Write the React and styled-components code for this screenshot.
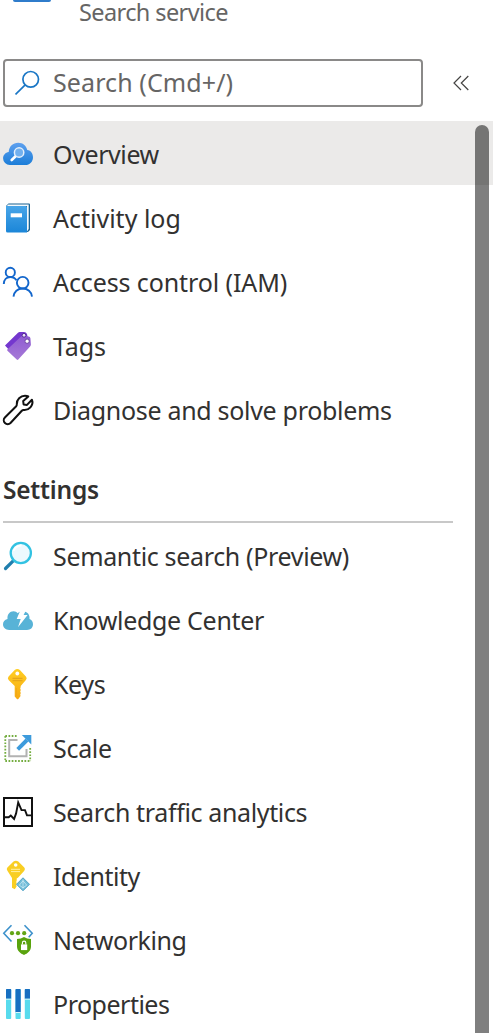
import React from "react";
import styled, { createGlobalStyle } from "styled-components";

const GlobalStyle = createGlobalStyle`
  * { box-sizing: border-box; }
  html, body { margin: 0; padding: 0; background: #fff; }
  body {
    font-family: "Noto Sans", "Open Sans", sans-serif;
    font-size: 25px;
    color: #323130;
    height: 1033px;
    overflow: hidden;
  }
`;

const Page = styled.main`
  width: 501px;
  height: 1033px;
  overflow: hidden;
  background: #fff;
  display: flex;
  flex-direction: column;
`;

const Header = styled.header`
  display: flex;
  height: 59px;
  flex: none;
  padding-left: 13px;
`;

const ServiceMark = styled.div`
  width: 38px;
  height: 1.5px;
  margin-right: 28px;
  background: #2f7ccb;
  border-radius: 0 0 6px 6px;
`;

const Subtitle = styled.div`
  height: 25px;
  line-height: 25px;
  font-size: 23.5px;
  color: #666564;
  white-space: nowrap;
  letter-spacing: ${(p) => p.$spacing}px;
`;

const Toolbar = styled.div`
  display: flex;
  align-items: center;
  flex: none;
  height: 48px;
  padding-left: 3px;
  margin-bottom: 14px;
`;

const SearchBox = styled.div`
  display: flex;
  align-items: center;
  width: 420px;
  height: 48px;
  padding-left: 10px;
  border: 2px solid #8a8988;
  border-radius: 4px;
`;

const Placeholder = styled.span`
  margin: 0 0 2px 12px;
  color: #666564;
  white-space: nowrap;
  letter-spacing: ${(p) => p.$spacing}px;
`;

const Collapse = styled.button`
  display: flex;
  border: 0;
  padding: 0;
  margin-left: 30px;
  background: none;
`;

const Menu = styled.nav`
  position: relative;
  flex: 1;
  width: 493px;
  min-height: 0;
`;

const Row = styled.div`
  display: flex;
  align-items: center;
  height: 64px;
  padding: 2px 0 0 3px;
  background: ${(p) => (p.$active ? "#ebeae9" : "transparent")};
`;

const Glyph = styled.svg`
  width: 30px;
  height: 30px;
  flex: none;
  overflow: visible;
`;

const Label = styled.span`
  margin-left: 20px;
  white-space: nowrap;
  letter-spacing: ${(p) => p.$spacing}px;
`;

const SectionTitle = styled.h2`
  margin: 0 0 0 3px;
  width: 450px;
  height: 82px;
  padding-top: 33px;
  border-bottom: 2px solid #c8c8c8;
  font-size: 24.5px;
  line-height: 32px;
  font-weight: 600;
  letter-spacing: ${(p) => p.$spacing}px;
`;

const Scrollbar = styled.div`
  position: absolute;
  top: 4px;
  right: 4px;
  bottom: -20px;
  width: 14px;
  border-radius: 7px;
  background: rgba(0, 0, 0, 0.5);
`;

const Icon = ({ children }) => <Glyph viewBox="0 0 30 30" fill="none">{children}</Glyph>;

const OverviewIcon = () => (
  <Icon>
    <defs>
      <linearGradient id="cloud" x1="0" y1="0" x2="0" y2="1">
        <stop stopColor="#5ea0ef" /><stop offset="1" stopColor="#1c7ed8" />
      </linearGradient>
    </defs>
    <path d="M6.800 26A6.700 6.700 0 0 1 .1 19.400c0-3.500 2.400-6 5.600-6.500C6 7.400 10 3.700 15.200 3.700c4.600 0 8 2.800 9.100 7.200C28 11.500 30 14.400 30 18.200 30 22.700 26.800 26 22.300 26z" fill="url(#cloud)" />
    <path d="M12.600 17.200 8.700 21" stroke="#fff" strokeWidth="2.600" strokeLinecap="round" />
    <circle cx="16.100" cy="13.500" r="4.700" fill="#72b0ee" stroke="#e4effb" strokeWidth="1.500" />
  </Icon>
);

const LogIcon = () => (
  <Icon>
    <defs>
      <linearGradient id="book" x1="0" y1="0" x2="0" y2="1">
        <stop stopColor="#48a5e8" /><stop offset="1" stopColor="#1b86d8" />
      </linearGradient>
    </defs>
    <path d="M5.500 .6H26q1 0 1 1V27l-2 2H5L3 27V3z" fill="#1a6292" />
    <path d="M5 1.500h20.700V26L24 28.500V3H4z" fill="#f4f9fc" />
    <path d="M3 3h19.500q1.500 0 1.500 1.500v25H4.500Q3 29.500 3 28z" fill="url(#book)" />
    <path d="M7.700 10.300H19v4H7.700z" fill="#fff" />
  </Icon>
);

const PeopleIcon = () => (
  <Icon>
    <g stroke="#1266cc" strokeWidth="1.900">
      <circle cx="7.300" cy="5.400" r="4.600" />
      <path d="M.8 17c0-4.300 2.800-7 6.500-7 2.700 0 5 1.300 6.100 3.300" />
      <circle cx="19.700" cy="15.700" r="5.800" />
      <path d="M10.500 29.700c.4-5 4.200-8.200 9.200-8.200 4.900 0 8.900 3.200 9.300 8.200" />
    </g>
  </Icon>
);

const TagsIcon = () => (
  <Icon>
    <defs>
      <linearGradient id="tag" x1="0" y1="0" x2="0" y2="1">
        <stop stopColor="#8f5bd2" /><stop offset="1" stopColor="#a67ad7" />
      </linearGradient>
    </defs>
    <path d="M2 14.500 15 1.700q.7-.7 1.700-.7L21 1.100q2 0 3 2l1 5L7 20z" fill="#7437ce" />
    <path d="M4.300 18.500 18 5.500q.9-.8 2-.7l5.700.8q1.500.2 1.700 1.700l.5 6.200q0 1.100-.8 1.900L15.300 28.500q-.8.8-1.600 0l-9-8.500q-.9-.8-.4-1.500z" fill="url(#tag)" />
    <circle cx="21" cy="4.300" r="1.900" fill="#eee4f9" stroke="#552f93" />
    <circle cx="24.100" cy="10.200" r="2.200" fill="#fff" stroke="#6942a1" />
  </Icon>
);

const WrenchIcon = () => (
  <Icon>
    <path d="M1.900 22.500 13.200 11.200c.6-.6.700-1.200.6-2C13.500 4.600 17.500.8 22 .8c1.400 0 2.200.1 3.300.6L20.200 6.100l.4 3.400 3.400.4 4.900-5.200c1 2.600.4 5.500-1.500 7.600-1.800 2-4.200 2.900-6.600 2.700-.9-.1-1.400.1-2 .7L7.500 28A3.900 3.900 0 0 1 1.900 22.500z" stroke="#111" strokeWidth="2" strokeLinejoin="round" />
  </Icon>
);

const SemanticIcon = () => (
  <Icon>
    <path d="M10.200 19.800 2.500 27.500" stroke="#207ead" strokeWidth="3.200" strokeLinecap="round" />
    <circle cx="17.800" cy="12" r="10.100" fill="#edf9fe" stroke="#32c2e2" strokeWidth="2.300" />
    <path d="M10.500 10C12 6.500 15 4.500 18.500 4.500" stroke="#fff" strokeWidth="1.800" />
  </Icon>
);

const KnowledgeIcon = () => (
  <Icon>
    <path d="M6.200 25C2.600 25 0 22.600 0 19.300c0-2.600 1.600-4.900 4.500-5.400-.4-4.300 2.200-7.600 6-7.600 1.800 0 3.300.8 4.300 2 1.300-1.600 2.900-2 5.200-2 4.500.1 7 3.600 6.500 7.600 2.200.8 3.500 2.800 3.500 5.400 0 3.400-2.400 5.700-6 5.700z" fill="#58b3d7" />
    <path d="M18.200 3.300h5.800l-3.400 6.700h4L15 22.200l2.700-8.200h-4z" fill="#fff" />
  </Icon>
);

const KeyShape = ({ id }) => (
  <>
    <defs>
      <linearGradient id={id} x1="0" y1="0" x2="0" y2="1">
        <stop stopColor="#ffce22" /><stop offset="1" stopColor="#f6aa13" />
      </linearGradient>
    </defs>
    <path d="M11.700 1Q14.300-.8 16.900 1l6 6.500q1.600 1.700 0 3.400L17.700 17v1l-.5 1.500.6 1.500-.6 1.600.6 1.500-.6 1.600.4 1.200-2.300 3q-.7.6-1.400 0l-2.200-2.500V17L5.600 10.900q-1.500-1.700 0-3.400z" fill={`url(#${id})`} />
    <circle cx="14.300" cy="4.500" r="1.900" fill="#fff" />
  </>
);

const KeyIcon = () => (
  <Icon>
    <KeyShape id="gold" />
    <path d="M9.500 9.300h10M9.500 11.700h10" stroke="#e0a01b" strokeWidth="1" />
    <path d="M13.400 19v8" stroke="#f0a41b" strokeWidth=".8" />
  </Icon>
);

const ScaleIcon = () => (
  <Icon>
    <path d="M2.300 3H15M2.300 3V28M2.300 28H28M27.200 15V28" stroke="#74ad40" strokeWidth="1.800" strokeDasharray="1.700 1.500" />
    <path d="M14.500 7H6.200V23.300H23.500V16" stroke="#b2b2b2" strokeWidth="2" />
    <path d="M14.700 16.300 24 7" stroke="#3d9bdc" strokeWidth="3.900" />
    <path d="M18.800 2h9.500v9.500z" fill="#3d9bdc" />
  </Icon>
);

const TrafficIcon = () => (
  <Icon>
    <path d="M1 1h28v28H1z" stroke="#111" strokeWidth="2" />
    <path d="M2 20.300h3.700l2.100-1.800 3.300 3.400 2-5.500 2.100-11 3.300 7.700h3.500l2 5.300h5" stroke="#111" strokeWidth="1.900" />
  </Icon>
);

const IdentityIcon = () => (
  <Icon>
    <path d="M10.500.4q2.400-1.500 4.800 0l6 6.200q1.300 1.600 0 3.200l-6.100 6.600-1.500 1.200v2l-.5 1.300.5 1.400-.5 1.400.5 1.500-1.900 3L9 26.700V17L4.400 9.800q-1.300-1.600 0-3.200z" fill="#f9ce23" />
    <circle cx="12.700" cy="4" r="1.800" fill="#fff" />
    <path d="M8 8.300h9M8 10.600h9" stroke="#fff1a4" />
    <path d="m20 16.800 6.500 6.500-6.500 6.500-6.500-6.500z" fill="#72bcd8" stroke="#55a6c7" strokeLinejoin="round" />
    <path d="M20 18.500v9M16.300 24.200 20 26.800l3.700-2.600L20 19.800z" stroke="#d8f0f8" strokeWidth=".7" />
  </Icon>
);

const NetworkIcon = () => (
  <Icon>
    <path d="M8.500.3.800 8.300l7.700 8.200M21.500.3l7.700 8-3.500 4" stroke="#3c91cb" strokeWidth="1.600" />
    <g fill="#62a515"><circle cx="9" cy="8.200" r="2.100" /><circle cx="15" cy="8.200" r="2.100" /><circle cx="21.200" cy="8.200" r="2.100" /></g>
    <path d="M14 14q4.200 0 7-2 2.800 2 7 2v7.500c0 4.500-3.500 6.900-7 8.500-3.500-1.600-7-4-7-8.500z" fill="#59a30d" />
    <path d="M18 19.400h6.200v5.700H18z" fill="#fff" />
    <path d="M19.400 19.400v-1.600a1.700 1.700 0 0 1 3.400 0v1.600" stroke="#fff" strokeWidth="1.100" />
  </Icon>
);

const PropertiesIcon = () => (
  <Icon>
    <rect x="3" y="0" width="5.200" height="30" rx=".9" fill="#58dbed" />
    <rect x="12.500" y="0" width="5.200" height="30" rx=".9" fill="#58dbed" />
    <rect x="21.800" y="0" width="5.200" height="30" rx=".9" fill="#58dbed" />
    <path d="M3 .8Q3 0 3.800 0h3.600q.8 0 .8.800v9H3zM12.500.8q0-.8.8-.8h3.600q.8 0 .8.800v22.500h-5.200zM21.800.8q0-.8.8-.8h3.600q.8 0 .8.800v9h-5.200z" fill="#176fc1" />
    <path d="M3 10.200h5.200M12.500 23.500h5.200M21.800 10.200H27" stroke="#d9f6fb" />
  </Icon>
);

const generalItems = [
  { label: "Overview", icon: OverviewIcon, active: true, spacing: -0.4 },
  { label: "Activity log", icon: LogIcon, spacing: 0 },
  { label: "Access control (IAM)", icon: PeopleIcon, spacing: -0.1 },
  { label: "Tags", icon: TagsIcon, spacing: -0.1 },
  { label: "Diagnose and solve problems", icon: WrenchIcon, spacing: -0.31 },
];

const settingsItems = [
  { label: "Semantic search (Preview)", icon: SemanticIcon, spacing: -0.34 },
  { label: "Knowledge Center", icon: KnowledgeIcon, spacing: -0.3 },
  { label: "Keys", icon: KeyIcon, spacing: -0.4 },
  { label: "Scale", icon: ScaleIcon, spacing: -0.3 },
  { label: "Search traffic analytics", icon: TrafficIcon, spacing: -0.36 },
  { label: "Identity", icon: IdentityIcon, spacing: -0.5 },
  { label: "Networking", icon: NetworkIcon, spacing: -0.45 },
  { label: "Properties", icon: PropertiesIcon, spacing: -0.5 },
];

const MenuItem = ({ label, icon: ItemIcon, active, spacing }) => (
  <Row $active={active}>
    <ItemIcon />
    <Label $spacing={spacing}>{label}</Label>
  </Row>
);

export default function App() {
  return (
    <Page>
      <GlobalStyle />
      <Header>
        <ServiceMark />
        <Subtitle $spacing={-0.6}>Search service</Subtitle>
      </Header>
      <Toolbar>
        <SearchBox>
          <svg width="26" height="26" viewBox="0 0 26 26" fill="none" stroke="#1976c5" strokeWidth="1.700">
            <circle cx="15.700" cy="9.300" r="7.800" />
            <path d="M10.200 14.800.5 24.500" />
          </svg>
          <Placeholder $spacing={0.1}>Search (Cmd+/)</Placeholder>
        </SearchBox>
        <Collapse aria-label="Collapse menu">
          <svg width="17" height="16" viewBox="0 0 17 16" fill="none" stroke="#454443" strokeWidth="1.200">
            <path d="M8 1 1 8l7 7M15.300 1l-7 7 7 7" />
          </svg>
        </Collapse>
      </Toolbar>
      <Menu>
        {generalItems.map((item) => <MenuItem key={item.label} {...item} />)}
        <SectionTitle $spacing={-0.22}>Settings</SectionTitle>
        {settingsItems.map((item) => <MenuItem key={item.label} {...item} />)}
        <Scrollbar />
      </Menu>
    </Page>
  );
}
